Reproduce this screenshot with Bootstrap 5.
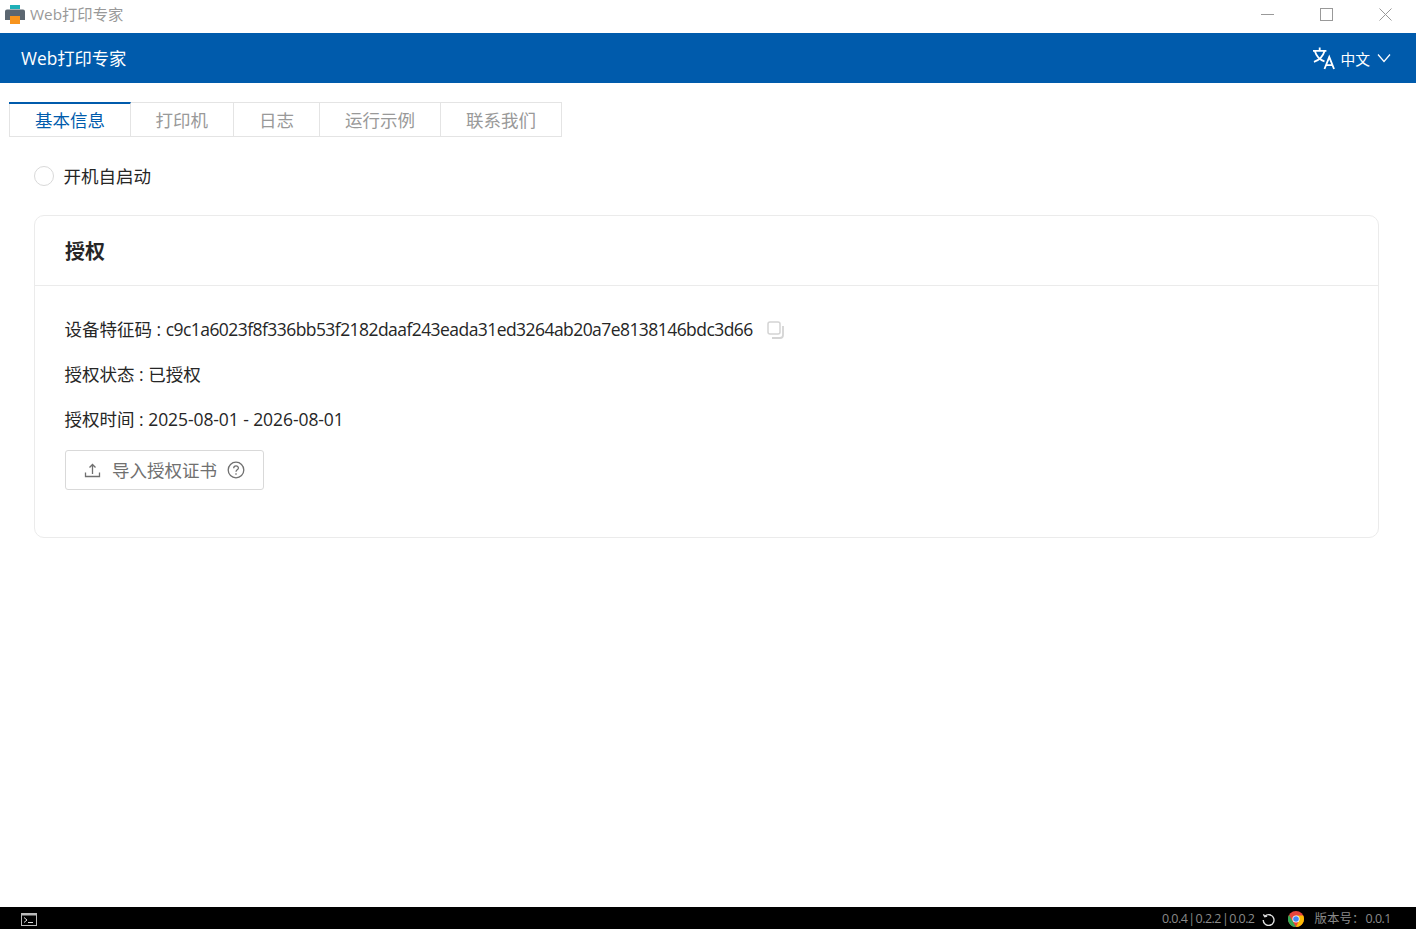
<!DOCTYPE html>
<html lang="zh-CN">
<head>
<meta charset="utf-8">
<title>Web打印专家</title>
<link href="https://cdn.jsdelivr.net/npm/bootstrap@5.3.0/dist/css/bootstrap.min.css" rel="stylesheet">
<style>
html,body{height:100%}
body{font-family:"Open Sans","Noto Sans CJK SC",sans-serif;font-size:17.5px;color:#262626;background:#fff;overflow:hidden}
.win-bar{height:33px;flex:none;color:#999;font-size:15.3px}
.win-bar .logo{margin-left:5px;margin-right:5px;margin-top:-4px}
.win-title{margin-top:-5px}
.win-ctl{width:59px;height:33px;margin-top:-5px}
.win-ctls{padding-right:1px}
.app-head{height:50px;flex:none;background:#005bac;color:#fff;padding:0 25px 0 21px;font-size:17.3px}
.head-title{margin-top:1px}
.lang{font-size:14.8px;gap:4px}
.lang-text{margin-top:2px;margin-left:1px}
.lang-arrow{margin-left:3px}
.tab-row{margin:19px 0 0 9px;height:35px;border:1px solid #e4e4e4;width:553px;box-sizing:border-box}
.tab-i{height:33px;padding:0 24.5px 0 25.5px;color:#999;border-right:1px solid #e4e4e4;line-height:34px;white-space:nowrap}
.tab-i:last-child{border-right:0}
.tab-i.on{color:#005bac;border-top:2px solid #005bac;margin:-1px -1px 0 -1px;height:35px;width:122px;padding-left:26px;line-height:32px}
.auto-row{margin:26px 0 0 34px;height:26px;gap:9.5px;color:#262626}
.auto-dot{width:20px;height:20px;border:1px solid #d9d9d9;border-radius:50%}
.auth-box{margin:26px 37px 0 34px;height:323px;border:1px solid #ebebeb;border-radius:10px}
.auth-top{height:70px;padding:3px 0 0 30px;border-bottom:1px solid #ebebeb;font-size:20px;font-weight:700;color:#262626}
.auth-body{padding:30px 30px 0}
.info-line{height:27px;margin:0 0 18px -.5px;line-height:27px;white-space:nowrap}
.hash-text{letter-spacing:-.56px}
.date-text{letter-spacing:-.08px}
.copy-ic{margin-left:14px;vertical-align:-3px}
.import-btn{width:199px;height:40px;margin-top:-1px;border:1px solid #d9d9d9;border-radius:3px;color:#707070;font-size:17.5px;gap:10px;padding:0 0 0 18px;background:#fff}
.import-label{margin-left:1px}
.foot-bar{height:22px;flex:none;margin-top:auto;background:#000;color:#8a8a8a;font-size:12.5px;padding:2px 25px 0 21px}
.foot-ver{letter-spacing:-.55px;margin-top:1px}
.foot-sep{margin:0 1px}
.foot-ver-end{margin-top:1px}
.foot-num{margin-left:1px;letter-spacing:-.5px}
.foot-refresh{margin-left:8px}
.foot-chrome{margin:0 10px 0 13px}
</style>
</head>
<body class="d-flex flex-column">
<div class="win-bar d-flex align-items-center">
  <svg class="logo" width="20" height="20" viewBox="0 0 20 20"><rect x="5" y="0" width="10" height="4" fill="#1fb0b8"/><path d="M2 4.500h16a2 2 0 0 1 2 2V15H0V6.500a2 2 0 0 1 2-2z" fill="#5b6670"/><rect x="5" y="11" width="10" height="8" fill="#f7941d"/></svg>
  <span class="win-title">Web打印专家</span>
  <div class="ms-auto d-flex win-ctls">
    <div class="win-ctl d-flex align-items-center justify-content-center"><svg width="13" height="13" viewBox="0 0 13 13"><path d="M0 6.500H13" stroke="#999" fill="none"/></svg></div>
    <div class="win-ctl d-flex align-items-center justify-content-center"><svg width="13" height="13" viewBox="0 0 13 13"><rect x=".5" y=".5" width="12" height="12" stroke="#999" fill="none"/></svg></div>
    <div class="win-ctl d-flex align-items-center justify-content-center"><svg width="13" height="13" viewBox="0 0 13 13"><path d="M.5.5l12 12M12.500.5l-12 12" stroke="#999" fill="none"/></svg></div>
  </div>
</div>
<header class="app-head d-flex align-items-center justify-content-between">
  <span class="head-title">Web打印专家</span>
  <div class="lang d-flex align-items-center">
    <svg width="22" height="23" viewBox="0 0 23 23" fill="none" stroke="#fff" stroke-width="1.900"><path d="M0 3.500H14M7 0v3.500M2 4c1.500 5 5 9 10 10.500M12 4C10.500 9 6 13.500 1 15"/><path d="M12 22.500L17 10l5 12.500M13.800 18.500h6.400"/></svg>
    <span class="lang-text">中文</span>
    <svg class="lang-arrow" width="14" height="10" viewBox="0 0 14 10"><path d="M1 1.500l6 7 6-7" stroke="#fff" stroke-width="1.200" fill="none"/></svg>
  </div>
</header>
<nav class="tab-row d-flex">
  <div class="tab-i on">基本信息</div>
  <div class="tab-i">打印机</div>
  <div class="tab-i">日志</div>
  <div class="tab-i">运行示例</div>
  <div class="tab-i">联系我们</div>
</nav>
<div class="auto-row d-flex align-items-center">
  <span class="auto-dot"></span><span>开机自启动</span>
</div>
<section class="card auth-box">
  <div class="auth-top d-flex align-items-center">授权</div>
  <div class="auth-body">
    <div class="info-line">设备特征码 : <span class="hash-text">c9c1a6023f8f336bb53f2182daaf243eada31ed3264ab20a7e8138146bdc3d66</span><svg class="copy-ic" width="18" height="18" viewBox="0 0 18 18" fill="none" stroke="#d4d4d4" stroke-width="1.500"><rect x="1" y="1" width="12" height="12" rx="2"/><path d="M16 5v9a3 3 0 0 1-3 3H5" stroke-width="1.800"/></svg></div>
    <div class="info-line">授权状态 : 已授权</div>
    <div class="info-line">授权时间 : <span class="date-text">2025-08-01 - 2026-08-01</span></div>
    <button class="btn import-btn d-flex align-items-center" type="button">
      <svg width="17" height="15" viewBox="0 0 17 15" fill="none" stroke="#707070" stroke-width="1.300"><path d="M8.500 11V2M5.500 4.500l3-3 3 3M1.500 9.500v4h14v-4"/></svg>
      <span class="import-label">导入授权证书</span>
      <svg width="18" height="18" viewBox="0 0 18 18" fill="none" stroke="#707070" stroke-width="1.300"><circle cx="9" cy="9" r="7.800"/><path d="M6.700 7.200c0-3 4.700-3 4.700-.2 0 1.800-2.400 1.900-2.400 3.700"/><path d="M9 12.300v1.400"/></svg>
    </button>
  </div>
</section>
<footer class="foot-bar d-flex align-items-center">
  <svg width="16" height="13" viewBox="0 0 16 13"><rect x=".5" y=".5" width="15" height="12" fill="#000" stroke="#bbb"/><rect x="0" y="0" width="16" height="2.500" fill="#bbb"/><path d="M3 4.500l3 2.500-3 2.500" stroke="#ddd" fill="none"/><path d="M7 9.500h5" stroke="#ddd"/></svg>
  <div class="ms-auto d-flex align-items-center">
    <span class="foot-ver">0.0.4<span class="foot-sep">|</span>0.2.2<span class="foot-sep">|</span>0.0.2</span>
    <svg class="foot-refresh" width="13" height="13" viewBox="0 0 14 14" fill="none" stroke="#ddd" stroke-width="1.500"><path d="M3 3.500a5.800 5.800 0 1 1-1.700 4"/><path d="M1.500 1.500l1.500 2.500 2.500-.8"/></svg>
    <svg class="foot-chrome" width="16" height="16" viewBox="0 0 16 16"><circle cx="8" cy="8" r="8" fill="#e8453c"/><path d="M8 16a8 8 0 0 0 7.200-11.500H8l3 5z" fill="#fbbc05"/><path d="M1 4 4.500 10 8 16a8 8 0 0 1-7-12z" fill="#34a853"/><circle cx="8" cy="8" r="3.600" fill="#fff"/><circle cx="8" cy="8" r="2.800" fill="#4285f4"/></svg>
    <span class="foot-ver-end">版本号：<span class="foot-num">0.0.1</span></span>
  </div>
</footer>
<script src="https://cdn.jsdelivr.net/npm/bootstrap@5.3.0/dist/js/bootstrap.bundle.min.js"></script>
</body>
</html>
